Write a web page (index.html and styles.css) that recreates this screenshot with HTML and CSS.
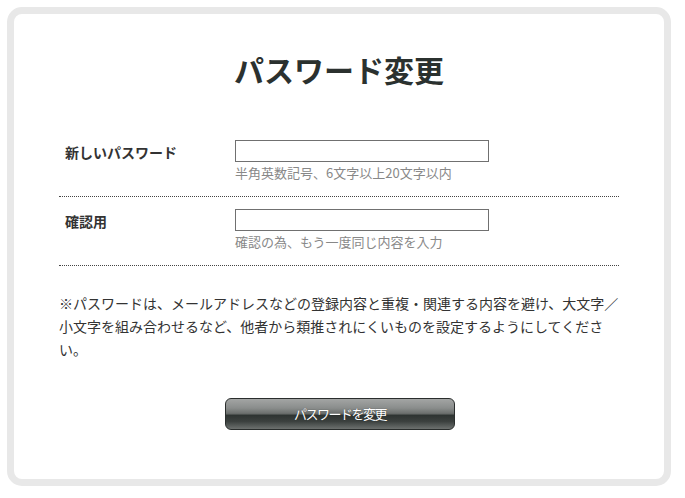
FILE: index.html
```html
<!DOCTYPE html>
<html lang="ja">
<head>
<meta charset="utf-8">
<title>パスワード変更</title>
<link rel="stylesheet" href="styles.css">
</head>
<body>
<div class="frame">
  <h1 class="title">パスワード変更</h1>
  <form class="form">
    <div class="row">
      <label class="label" for="pw1">新しいパスワード</label>
      <div class="field">
        <input class="input" id="pw1" type="password">
        <div class="hint">半角英数記号、6文字以上20文字以内</div>
      </div>
    </div>
    <div class="row">
      <label class="label" for="pw2">確認用</label>
      <div class="field">
        <input class="input" id="pw2" type="password">
        <div class="hint">確認の為、もう一度同じ内容を入力</div>
      </div>
    </div>
    <p class="note">※パスワードは、メールアドレスなどの登録内容と重複・関連する内容を避け、大文字／小文字を組み合わせるなど、他者から類推されにくいものを設定するようにしてください。</p>
    <div class="actions">
      <button class="button" type="button">パスワードを変更</button>
    </div>
  </form>
</div>
</body>
</html>
```

FILE: styles.css
```css
html, body {
  margin: 0;
  padding: 0;
  background: #ffffff;
}
body {
  padding: 7px;
  font-family: "Noto Sans CJK JP", "Noto Sans", sans-serif;
  color: #333333;
}
.frame {
  box-sizing: border-box;
  width: 664px;
  height: 479px;
  border: 7px solid #e8e8e8;
  border-radius: 15px;
  background: #ffffff;
  padding: 0 45px;
}
.title {
  margin: 35px 0 0;
  font-size: 30px;
  line-height: 40px;
  font-weight: bold;
  text-align: center;
  color: #2b312f;
}
.form {
  margin: 39px 0 0;
  width: 560px;
}
.row {
  display: flex;
  padding: 12px 0 13px;
  border-bottom: 1px dotted #444444;
}
.label {
  width: 170px;
  padding-left: 6px;
  font-size: 14px;
  line-height: 24px;
  font-weight: bold;
  color: #333333;
}
.field {
  display: flex;
  flex-direction: column;
}
.input {
  box-sizing: border-box;
  width: 254px;
  height: 22px;
  margin: 0;
  border: 1px solid #707070;
  border-radius: 0;
  padding: 0 4px;
  background: #ffffff;
}
.hint {
  font-size: 13px;
  line-height: 21px;
  color: #888888;
}
.note {
  margin: 26px 0 0;
  width: 562px;
  font-size: 14px;
  line-height: 23px;
  color: #333333;
}
.actions {
  display: flex;
  justify-content: center;
  margin-top: 37px;
  padding-left: 2px;
}
.button {
  box-sizing: border-box;
  width: 230px;
  height: 32px;
  border: 1px solid #2a2e2d;
  border-radius: 6px;
  background: linear-gradient(to bottom, #a3a5a4 0%, #8a8d8c 30%, #6b6f6d 48%, #2e3432 55%, #3c413f 75%, #6d716f 100%);
  color: #ffffff;
  font-family: "Noto Sans CJK JP", sans-serif;
  font-size: 13px;
  letter-spacing: -1.5px;
  line-height: 30px;
  padding: 0;
  text-shadow: 0 0 1px rgba(0,0,0,0.5);
  cursor: pointer;
}
```
